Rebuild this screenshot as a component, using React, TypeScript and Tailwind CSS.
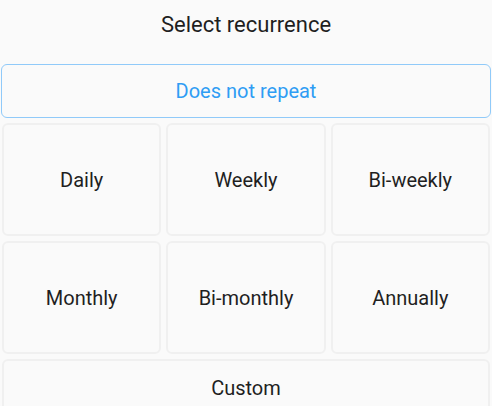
import React from "react";

const options = ["Daily", "Weekly", "Bi-weekly", "Monthly", "Bi-monthly", "Annually"];

const App: React.FC = () => {
  return (
    <div
      className="min-h-screen bg-[#fafafa] px-[1px] overflow-hidden h-[406px]"
      style={{ fontFamily: "Roboto, 'Noto Sans', sans-serif" }}
    >
      {/* Header */}
      <div className="h-[48px] flex items-center justify-center text-[22px] text-[#1f1f1f]">
        Select recurrence
      </div>

      {/* Does not repeat */}
      <button className="mt-[16px] w-full h-[54px] rounded-[6px] border border-[#90caf9] bg-[#fafafa] text-[20px] text-[#2f9df4] flex items-center justify-center">
        Does not repeat
      </button>

      {/* Options grid */}
      <div className="mt-[5px] grid grid-cols-3 gap-[5px] px-[1px]">
        {options.map((opt) => (
          <button
            key={opt}
            className="h-[113px] rounded-[6px] border-2 border-[#f0f0f0] bg-[#fafafa] text-[20px] text-[#1f1f1f] flex items-center justify-center"
          >
            {opt}
          </button>
        ))}
        <button className="col-span-3 h-[60px] rounded-[6px] border-2 border-[#f0f0f0] bg-[#fafafa] text-[20px] text-[#1f1f1f] flex items-start justify-center pt-[12px]">
          Custom
        </button>
      </div>
    </div>
  );
};

export default App;
